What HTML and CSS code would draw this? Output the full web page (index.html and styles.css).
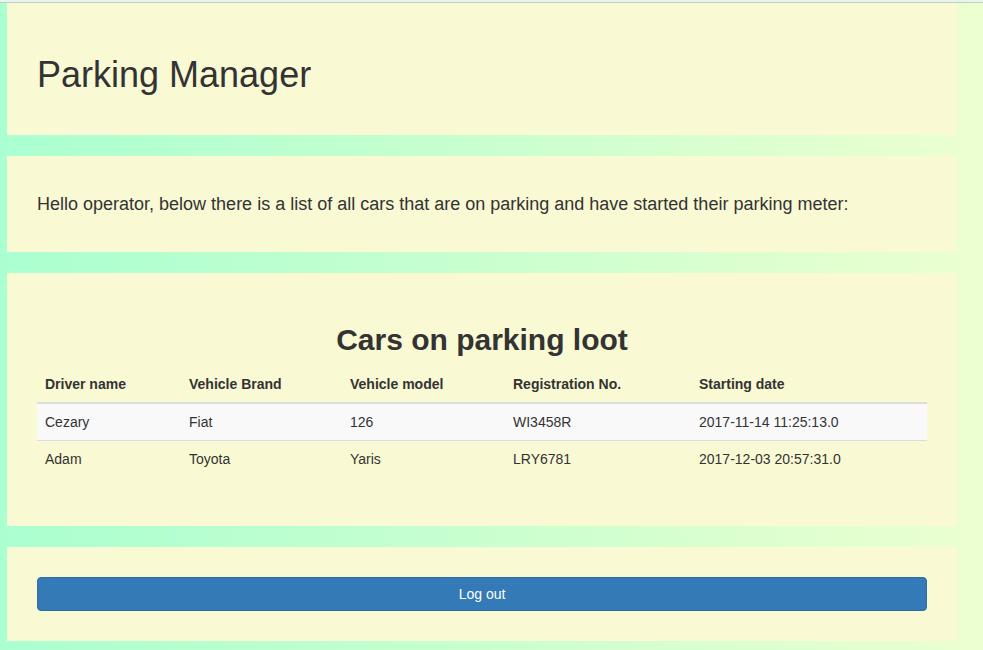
FILE: index.html
```html
<!DOCTYPE html>
<html>
<head>
<meta charset="utf-8">
<title>Parking Manager</title>
<link rel="stylesheet" href="styles.css">
</head>
<body>
<div class="topline"></div>
<div class="page">
  <section class="panel">
    <h1 class="title">Parking Manager</h1>
  </section>
  <section class="panel">
    <h4 class="intro">Hello operator, below there is a list of all cars that are on parking and have started their parking meter:</h4>
  </section>
  <section class="panel">
    <h2 class="table-title">Cars on parking loot</h2>
    <table class="cars">
      <thead>
        <tr>
          <th class="c1">Driver name</th>
          <th class="c2">Vehicle Brand</th>
          <th class="c3">Vehicle model</th>
          <th class="c4">Registration No.</th>
          <th class="c5">Starting date</th>
        </tr>
      </thead>
      <tbody>
        <tr class="odd">
          <td>Cezary</td>
          <td>Fiat</td>
          <td>126</td>
          <td>WI3458R</td>
          <td>2017-11-14 11:25:13.0</td>
        </tr>
        <tr>
          <td>Adam</td>
          <td>Toyota</td>
          <td>Yaris</td>
          <td>LRY6781</td>
          <td>2017-12-03 20:57:31.0</td>
        </tr>
      </tbody>
    </table>
  </section>
  <section class="panel">
    <button class="btn-logout" type="button">Log out</button>
  </section>
</div>
</body>
</html>
```
FILE: styles.css
```css
html, body {
  margin: 0;
  padding: 0;
}
body {
  font-family: "Liberation Sans", Arial, sans-serif;
  font-size: 14px;
  line-height: 1.42857;
  color: #333;
  background: linear-gradient(to right, #aaffd0 0%, #c6ffcf 45%, #ecffd0 100%);
  min-height: 650px;
}
.topline {
  height: 2px;
  border-bottom: 1px solid #c4cac4;
  background: #e6f6ea;
}
.page {
  padding-left: 7px;
  display: flex;
  flex-direction: column;
  gap: 21px;
}
.panel {
  width: 890px;
  padding: 30px;
  background: #f9f9d4;
}
.title {
  margin: 22px 0 10px;
  font-size: 36px;
  font-weight: normal;
  line-height: 1.1;
}
.intro {
  margin: 9px 0 8px;
  font-size: 18px;
  font-weight: normal;
  line-height: 1.1;
}
.table-title {
  margin: 20px 0 10px;
  font-size: 30px;
  font-weight: bold;
  line-height: 1.1;
  text-align: center;
}
.cars {
  width: 100%;
  border-collapse: collapse;
  border-spacing: 0;
  margin-bottom: 19px;
  table-layout: fixed;
}
.cars th, .cars td {
  padding: 8px;
  line-height: 20px;
  text-align: left;
  vertical-align: top;
}
.cars th {
  font-weight: bold;
  border-bottom: 2px solid #ddd;
}
.cars td {
  border-top: 1px solid #ddd;
}
.cars tbody tr:first-child td {
  border-top: 0;
}
.cars tr.odd {
  background: #f9f9f9;
}
.c1 { width: 128px; }
.c2 { width: 145px; }
.c3 { width: 147px; }
.c4 { width: 170px; }
.c5 { width: auto; }
.btn-logout {
  display: block;
  width: 100%;
  height: 34px;
  padding: 6px 12px;
  font-family: inherit;
  font-size: 14px;
  line-height: 20px;
  color: #fff;
  background: #337ab7;
  border: 1px solid #2e6da4;
  border-radius: 4px;
  cursor: pointer;
}
```
